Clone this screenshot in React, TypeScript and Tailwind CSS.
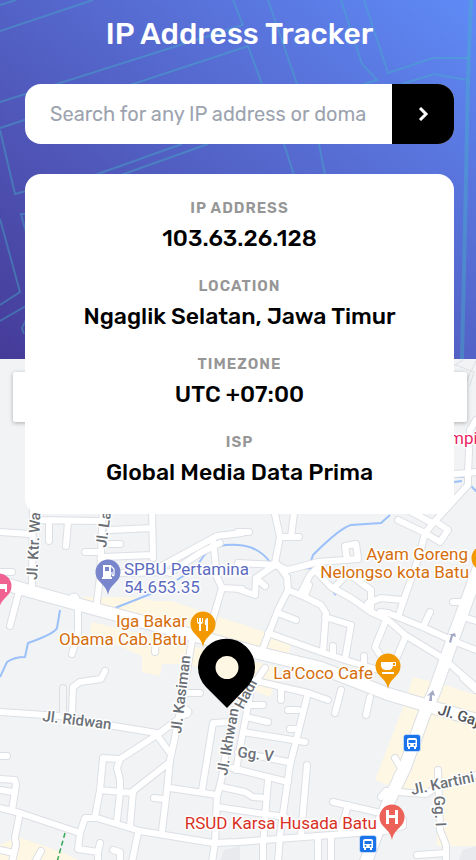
import type { FormEvent, ReactNode } from 'react';

const details = [
  { label: 'IP Address', value: '103.63.26.128' },
  { label: 'Location', value: 'Ngaglik Selatan, Jawa Timur' },
  { label: 'Timezone', value: 'UTC +07:00' },
  { label: 'ISP', value: 'Global Media Data Prima' },
];

function StreetPattern() {
  return (
    <svg
      className="absolute inset-0 h-full w-full"
      viewBox="0 0 476 359"
      preserveAspectRatio="xMidYMid slice"
      fill="none"
      stroke="#44b4c8"
      strokeOpacity="0.4"
      strokeWidth="2"
      aria-hidden="true"
    >
      <path d="M0 5 16 0M0 31 93 0M0 102 243 25M0 128 248 46M95 175 182 144M121 175 208 144" />
      <path d="M233 0 243 25M248 46 262 84M268 0 297 84M341 0 362 64 377 80 364 84M364 0 388 73 433 58H470M402 84 434 74 467 80" />
      <path d="M284 144 294 175M319 144 325 175M0 130 15 194 26 191M26 214H21L26 232M0 219 20 292 0 305M0 321 26 306M26 320 22 328 24 334" />
      <path d="M471 0 468 80 466 180 462 359" strokeWidth="4" />
    </svg>
  );
}

const minorRoads = [
  'M33 500 32 587M103 505 100 577 96 610M0 532 30 534M34 520 100 521M49 522V541M68 522 66 546M110 530 152 528M152 508 153 558M85 552H101M110 544H120M102 557 153 555',
  'M120 573 172 572M160 567 217 536 242 533M170 573 200 553 220 543M213 540 217 577 222 588 242 589M222 588 207 639M0 572H12M18 595 10 626',
  'M78 610V633L72 654M156 636 155 652M72 714 73 687 80 682 101 679 105 671',
  'M0 712 60 716 108 725 157 733M120 759 157 735 188 712M192 640 184 690 175 737 170 760 167 790 162 831M170 753 157 735M185 693H200',
  'M103 758 120 759 117 768 120 780V793L117 820M103 758 100 790 95 817M100 790 133 793M170 762 133 791 130 827M154 798 164 799',
  'M0 756H7M0 779 15 780 16 785 12 810M0 790 13 792M0 808 20 813 80 833 85 818 97 818 140 831 213 843 238 842 318 836 385 831 403 826V820',
  'M20 813 15 837 16 845 12 862M0 850 14 853M80 833 78 849 98 852 100 843M98 852V862M113 850 120 852V862M138 833 132 862M41 851 35 862',
  'M170 788 217 795M202 790 213 723 230 722M265 668 250 690 232 715 222 777 217 797 215 843 212 862M222 787 245 792 253 797 266 798M232 768 288 782M217 807 285 817',
  'M308 693 298 733 290 765 285 800 280 835 278 862M252 680 308 693 328 700M341 690 335 713M370 697 366 715M281 687V700M250 695 243 732 236 770M248 705H263M246 717 268 722M243 732 305 742M288 710H298M290 729H296M238 752 288 762',
  'M307 765 301 835M333 802 385 814M348 805 341 830M268 780 263 845V862M318 838V862M331 838V862M395 758 401 768M381 797 386 791 411 793 426 794 440 785 476 775M438 770 440 830 446 845V862M417 855 446 853M463 678 476 690',
  'M273 505 280 537 275 563M295 505 291 537M280 537H299M238 532H249M238 563 275 565 288 570 318 562 358 559 356 544 345 546 347 560M275 565 256 578 265 586M256 578 255 595 238 589',
  'M278 565 287 577 288 590 278 610 261 653M288 590 305 597 321 605 326 613 323 651M325 617 351 625 345 659M278 613 296 620M268 633 321 652 345 660 385 672M333 646V655M364 656V665',
  'M301 593 310 575 321 565M309 585 305 596M315 570 331 587 351 598 371 612 388 620 405 635 441 657M380 612 388 613 425 628 451 640 476 650M445 660 476 687M335 587 348 573 371 590V608M368 603 381 598 402 600',
  'M425 533 420 553 398 617M398 520 425 533 440 542 448 530 435 521 425 533M406 509 432 523M435 521 468 485V473L476 472M468 473 470 430 476 420M454 474 468 473M386 620 375 647 380 655M405 638 396 659M430 612 423 627M453 602H465M463 617 476 621',
];

const mainRoad = 'M-5 581 33 592 117 615 200 637 255 652 321 668 388 694 435 708 480 721';
const avenue = 'M480 565 455 633 435 690 425 712 405 767 388 803 365 864';

type PinProps = { x: number; y: number; color: string; children?: ReactNode };

/* Teardrop pin; x and y are the centre of its head. */
function Pin({ x, y, color, children }: PinProps) {
  return (
    <g transform={`translate(${x} ${y})`}>
      <path
        d="M0 23C-1 17-4 14-8 10-11 7-12.500 4-12.500 0A12.500 12.500 0 0 1 12.500 0C12.500 4 11 7 8 10 4 14 1 17 0 23Z"
        fill={color}
      />
      {children}
    </g>
  );
}

function BusStop({ x, y }: { x: number; y: number }) {
  return (
    <g transform={`translate(${x} ${y})`}>
      <rect x="-8.500" y="-8.500" width="17" height="17" rx="2.500" fill="#1a73e8" stroke="#fff" strokeWidth="0.500" />
      <path d="M-5-3Q-5-5-3-5H3Q5-5 5-3V4H4V6H2V4H-2V6H-4V4H-5Z" fill="#fff" />
      <path d="M-3.500-3H3.500V0H-3.500Z" fill="#1a73e8" />
      <circle cx="-2.500" cy="2" r="0.900" fill="#1a73e8" />
      <circle cx="2.500" cy="2" r="0.900" fill="#1a73e8" />
    </g>
  );
}

function StreetMap() {
  return (
    <svg
      className="absolute inset-0 h-full w-full font-[Roboto,sans-serif]"
      viewBox="0 359 476 501"
      preserveAspectRatio="xMidYMin slice"
      role="img"
      aria-label="Map of the area around the IP address"
    >
      <rect x="0" y="359" width="476" height="501" fill="#f1f3f4" />

      <g fill="#fef7e3">
        <path d="M82 597H140L152 601H172L207 613 268 633 291 643 288 659 200 640 90 612Z" />
        <path d="M92 622 200 648 280 668 270 697 238 684 190 664H162L160 676 142 672V656L90 633Z" />
        <path d="M413 677 445 685 476 695V846H437V795L400 790 375 780 404 705Z" />
        <path d="M18 837 62 852 82 862H0V845Z" />
      </g>
      <path d="M463 850 476 846V862H458ZM224 850 240 846V862H220Z" fill="#e8eaed" />

      <g fill="none" stroke="#9cc0f9" strokeWidth="2" strokeLinejoin="round">
        <path d="M390 515 381 523 351 525Q340 528 313 555L311 561M153 593 115 608M60 610 57 628Q54 634 28 643L25 657Q14 657 7 662L0 677" />
        <path d="M270 562Q258 546 238 545 220 544 212 549 203 554 197 567L177 580M290 569 313 568M330 588 336 595M454 477H466M454 482 462 481M470 485 477 492" />
      </g>

      <g fill="none" strokeLinejoin="round" strokeLinecap="round">
        <g stroke="#dcdfe4" strokeWidth="8">
          {minorRoads.map((d) => (
            <path key={d} d={d} />
          ))}
          <path d="M63 688V713" />
        </g>
        <g stroke="#dcdfe4">
          <path d={mainRoad} strokeWidth="14" />
          <path d={avenue} strokeWidth="14" />
        </g>
        <g fill="#fff" stroke="#dcdfe4">
          <circle cx="74" cy="599" r="6" />
          <circle cx="186" cy="712" r="6" />
          <circle cx="398" cy="777" r="5" />
        </g>
        <g stroke="#fff" strokeWidth="6">
          {minorRoads.map((d) => (
            <path key={d} d={d} />
          ))}
        </g>
        <path d="M63 688V713" stroke="#f4f5f6" strokeWidth="6" />
        <g stroke="#fff">
          <path d={mainRoad} strokeWidth="12" />
          <path d={avenue} strokeWidth="12" />
        </g>
        <path d="M448 362 474 372 470 385M476 361 466 382M453 366 463 360" stroke="#dcdfe4" strokeWidth="1" />
        <path d="M65 833 57 862" stroke="#34a853" strokeWidth="1.500" strokeDasharray="5 3" strokeLinecap="butt" />
      </g>

      <g fill="#a3a9c4">
        <path d="M455 633 456 637 453 636 451 643 449 642 451 635 448 635Z" />
        <path d="M433 690 435 696 432 695 432 701H429L430 695 427 696Z" />
      </g>

      <g fontSize="15" fontWeight="500" fill="#6b7076" stroke="#fff" strokeWidth="3" strokeLinejoin="round" paintOrder="stroke">
        <text transform="translate(37 580) rotate(-87)">Jl. Ktr. Wastu</text>
        <text transform="translate(106 548) rotate(-82)">Jl. Lahor</text>
        <text transform="translate(42 721) rotate(7)">Jl. Ridwan</text>
        <text transform="translate(181 734) rotate(-83)">Jl. Kasiman</text>
        <text transform="translate(227 776) rotate(-80)">Jl. Ikhwan</text>
        <text transform="translate(243 710) rotate(-62)">Hadi</text>
        <text transform="translate(237 757) rotate(7)">Gg. V</text>
        <text transform="translate(412 795) rotate(-12)">Jl. Kartini</text>
        <text transform="translate(434 796) rotate(87)">Gg. I</text>
        <text transform="translate(437 714) rotate(17)" fill="#505459">Jl. Gajah Mada</text>
      </g>

      <g fontSize="17" stroke="#fff" strokeWidth="3" strokeLinejoin="round" paintOrder="stroke">
        <g fill="#5c6bc0">
          <text x="124" y="575">SPBU Pertamina</text>
          <text x="124" y="593">54.653.35</text>
        </g>
        <g fill="#d56e0c" textAnchor="end">
          <text x="187" y="627">Iga Bakar</text>
          <text x="187" y="645">Obama Cab.Batu</text>
          <text x="468" y="560">Ayam Goreng</text>
          <text x="469" y="578">Nelongso kota Batu</text>
          <text x="373" y="679">La’Coco Cafe</text>
        </g>
        <text x="377" y="829" fill="#d93025" textAnchor="end">RSUD Karsa Husada Batu</text>
        <text x="449" y="444" fill="#e91e63">mping</text>
      </g>

      <BusStop x={412} y={743} />
      <BusStop x={368} y={844} />

      <Pin x={108} y={572} color="#7986cb">
        <path d="M-5-7H3V5H4V7H-6V5H-5ZM-3-5V-1H1V-5Z" fill="#fff" fillRule="evenodd" />
        <path d="M3-6 6-3V3Q5 5 4 2V0" fill="none" stroke="#fff" strokeWidth="1.200" />
      </Pin>
      <Pin x={203} y={624} color="#f29900">
        <path d="M-6-6V-2Q-6 0-4 0V7H-2V0Q0 0 0-2V-6H-1V-2H-2V-6H-4V-2H-5V-6ZM5-6Q1-6 2 1H3V7H5Z" fill="#fff" />
      </Pin>
      <Pin x={388} y={666} color="#f29900">
        <path d="M-7-4H8V0H5Q4 4 1 4H-2Q-6 4-7 0ZM5-3V-1H7V-3ZM-6 6H6V8H-6Z" fill="#fff" fillRule="evenodd" />
      </Pin>
      <Pin x={-1} y={586} color="#f06292">
        <path d="M-5-2H8V6H6V3H0V1H-5Z" fill="#fff" />
      </Pin>
      <Pin x={484} y={558} color="#f29900" />
      <Pin x={392} y={817} color="#ec6259">
        <path d="M-6-7H-3V-2H3V-7H6V7H3V1H-3V7H-6Z" fill="#fff" />
      </Pin>

      <path
        d="M206 687A28.500 28.500 0 1 1 247 687L227 708ZM227 656A11.500 11.500 0 1 0 227 679 11.500 11.500 0 1 0 227 656Z"
        fill="#000"
        fillRule="evenodd"
      />
    </svg>
  );
}

export default function App() {
  const handleSubmit = (event: FormEvent) => event.preventDefault();

  return (
    <main className="flex min-h-screen flex-col bg-[#f1f3f4] font-[Rubik,Inter,sans-serif]">
      <header className="relative bg-linear-to-tr from-[#453b98] to-[#5f8bf7] pt-4 pr-[22px] pl-[25px]">
        <StreetPattern />
        <div className="relative z-10">
          <h1 className="text-center text-3xl leading-9 font-medium text-white">IP Address Tracker</h1>
          <form onSubmit={handleSubmit} className="mt-8 flex h-[60px] overflow-hidden rounded-2xl bg-white">
            <input
              type="text"
              aria-label="IP address or domain"
              placeholder="Search for any IP address or domain"
              className="min-w-0 flex-1 px-[25px] text-xl text-black outline-none placeholder:text-[#9ca3af]"
            />
            <button type="submit" aria-label="Search" className="flex w-[62px] items-center justify-center bg-black">
              <svg width="11" height="14" viewBox="0 0 11 14" fill="none" stroke="#fff" strokeWidth="3" aria-hidden="true">
                <path d="M2 1 8 7 2 13" />
              </svg>
            </button>
          </form>
          <dl className="mt-[30px] -mb-[155px] flex flex-col gap-[22px] rounded-2xl bg-white px-4 pt-6 pb-[26px] text-center">
            {details.map(({ label, value }) => (
              <div key={label}>
                <dt className="text-[15px] leading-5 font-semibold tracking-[1px] text-[#969696] uppercase">{label}</dt>
                <dd className="mt-1 text-[23px] leading-8 font-medium text-black">{value}</dd>
              </div>
            ))}
          </dl>
        </div>
      </header>
      <section aria-label="Map" className="relative min-h-[500px] flex-1 overflow-hidden">
        <StreetMap />
        <div className="absolute top-[13px] right-[9px] left-[13px] h-[50px] rounded-xs bg-white shadow-[0_1px_4px_rgba(0,0,0,0.3)]" />
      </section>
    </main>
  );
}
